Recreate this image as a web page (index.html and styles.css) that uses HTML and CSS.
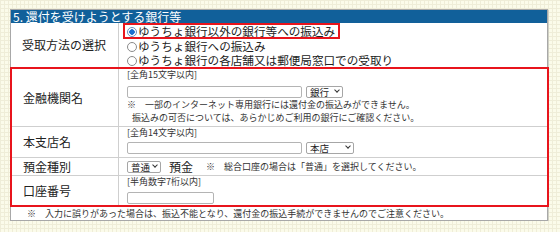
FILE: index.html
```html
<!DOCTYPE html>
<html lang="ja">
<head>
    <meta charset="UTF-8">
    <title>還付を受けようとする銀行等</title>
    <link rel="stylesheet" href="styles.css">
</head>
<body>
    <div class="page">
        <div class="panel">
            <div class="title">5. 還付を受けようとする銀行等</div>

            <div class="row method-row">
                <div class="label">受取方法の選択</div>
                <div class="cell methods">
                    <label class="opt picked"><input type="radio" name="method" checked>ゆうちょ銀行以外の銀行等への振込み</label>
                    <label class="opt"><input type="radio" name="method">ゆうちょ銀行への振込み</label>
                    <label class="opt"><input type="radio" name="method">ゆうちょ銀行の各店舗又は郵便局窓口での受取り</label>
                </div>
            </div>

            <div class="red-box">
                <div class="row bank">
                    <div class="label">金融機関名</div>
                    <div class="cell">
                        <div class="hint">[全角15文字以内]</div>
                        <div class="field">
                            <input type="text" class="wide">
                            <span class="sel sel-bank"><select><option>銀行</option></select></span>
                        </div>
                        <div class="note">※　一部のインターネット専用銀行には還付金の振込みができません。</div>
                        <div class="note indent">振込みの可否については、あらかじめご利用の銀行にご確認ください。</div>
                    </div>
                </div>
                <div class="row branch">
                    <div class="label">本支店名</div>
                    <div class="cell">
                        <div class="hint">[全角14文字以内]</div>
                        <div class="field">
                            <input type="text" class="wide">
                            <span class="sel sel-branch"><select><option>本店</option></select></span>
                        </div>
                    </div>
                </div>
                <div class="row kind">
                    <div class="label">預金種別</div>
                    <div class="cell">
                        <div class="field">
                            <span class="sel sel-kind"><select><option>普通</option></select></span>
                            <span class="yokin">預金</span>
                            <span class="note inline">※　総合口座の場合は「普通」を選択してください。</span>
                        </div>
                    </div>
                </div>
                <div class="row account">
                    <div class="label">口座番号</div>
                    <div class="cell">
                        <div class="hint">[半角数字7桁以内]</div>
                        <div class="field">
                            <input type="text" class="short">
                        </div>
                    </div>
                </div>
            </div>

            <div class="foot-note">※　入力に誤りがあった場合は、振込不能となり、還付金の振込手続ができませんのでご注意ください。</div>
        </div>
    </div>
</body>
</html>
```

FILE: styles.css
```css
body {
    margin: 0;
    font-family: "Noto Sans CJK JP", "Liberation Sans", sans-serif;
    color: #222;
    background-color: #fbfbea;
    background-image:
        linear-gradient(#efedd8 1px, transparent 1px),
        linear-gradient(90deg, #efedd8 1px, transparent 1px);
    background-size: 4px 4px;
}

.page {
    padding: 9px 0 0 10px;
}

.panel {
    width: 536px;
    background-color: #fff;
    border: 1px solid #a8a8a8;
    box-shadow: 1px 1px 0 #d0d0c4;
}

.title {
    background-color: #11609a;
    color: #fff;
    font-size: 12px;
    line-height: 13px;
    height: 13px;
    padding-left: 2px;
}

/* rows: label column + content column */
.row {
    display: grid;
    grid-template-columns: 108px 1fr;
}

.red-box .row {
    grid-template-columns: 107px 1fr;
}

.red-box .row + .row {
    border-top: 1px solid #cfcfcf;
}

.label {
    display: flex;
    align-items: center;
    font-size: 12px;
    line-height: 14px;
    padding-left: 11px;
    border-right: 1px solid #cfcfcf;
}

.cell {
    padding-left: 8px;
}

.method-row {
    height: 44px;
}

.bank {
    height: 57px;
}

.branch {
    height: 30px;
}

.kind {
    height: 17px;
}

.account {
    height: 29px;
}

.methods {
    padding-left: 4px;
    font-size: 11.6px;
}

.opt {
    display: block;
    height: 14px;
    line-height: 14px;
    padding-left: 4px;
    white-space: nowrap;
}

.opt.picked {
    display: inline-block;
    height: 12px;
    line-height: 12px;
    padding: 0 3px 0 2px;
    border: 2px solid #e8141c;
}

.opt input {
    appearance: none;
    width: 10px;
    height: 10px;
    margin: 0 1px 0 0;
    border: 1px solid #8a8a8a;
    border-radius: 50%;
    background: #fff;
    vertical-align: -1px;
}

.opt input:checked {
    background: radial-gradient(circle, #1b6fd0 0, #1b6fd0 2.5px, #fff 3px);
    border-color: #6a8fc0;
}

.red-box {
    margin: 0 -2px 0 -1px;
    border: 2px solid #e8141c;
}

.hint {
    font-size: 9px;
    line-height: 12px;
    height: 12px;
    color: #333;
}

.field {
    display: flex;
    align-items: center;
    gap: 4px;
    height: 13px;
}

.field input {
    height: 12px;
    box-sizing: border-box;
    border: 1px solid #b4b4b4;
    border-radius: 2px;
    padding: 0;
    margin: 0;
}

.wide {
    width: 175px;
}

.short {
    width: 87px;
}

.sel {
    position: relative;
    display: block;
    height: 12px;
}

.sel select {
    appearance: none;
    display: block;
    width: 100%;
    height: 12px;
    box-sizing: border-box;
    font-family: inherit;
    font-size: 9.5px;
    line-height: 10px;
    padding: 0 0 0 3px;
    margin: 0;
    border: 1px solid #a6a6a6;
    border-radius: 2px;
    background: #fff;
    color: #222;
}

.sel::after {
    content: "";
    position: absolute;
    right: 4px;
    top: 2px;
    width: 3px;
    height: 3px;
    border-right: 1.3px solid #333;
    border-bottom: 1.3px solid #333;
    transform: rotate(45deg);
    pointer-events: none;
}

.sel-bank {
    width: 37px;
}

.sel-branch {
    width: 48px;
}

.sel-kind {
    width: 34px;
}

.note {
    font-size: 9px;
    line-height: 13px;
    height: 13px;
    color: #333;
    white-space: nowrap;
}

.note.indent {
    padding-left: 5px;
}

.note.inline {
    margin-left: 9px;
}

.yokin {
    font-size: 12px;
    line-height: 13px;
    margin-left: 4px;
}

.bank .field {
    margin-top: 4px;
}

.branch .field {
    margin-top: 2px;
}

.kind .cell {
    display: flex;
    align-items: center;
}

.account .field {
    margin-top: 3px;
}

.foot-note {
    font-size: 9px;
    line-height: 13px;
    color: #333;
    padding-left: 16px;
}
```
